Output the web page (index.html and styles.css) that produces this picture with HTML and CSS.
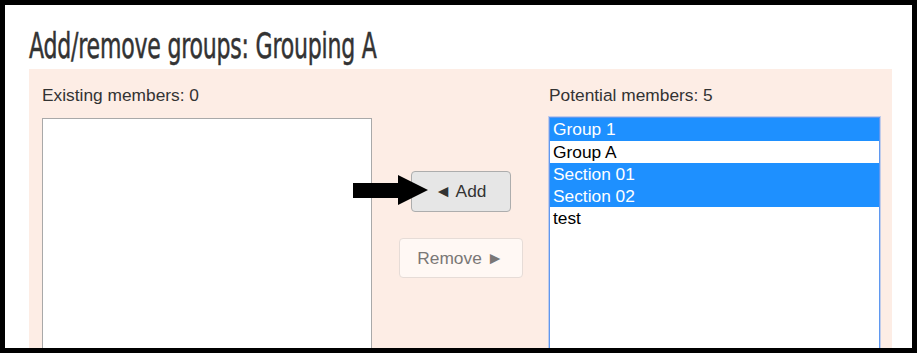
FILE: index.html
```html
<!DOCTYPE html>
<html>
<head>
<meta charset="utf-8">
<link rel="stylesheet" href="styles.css">
</head>
<body>
<div class="frame">
  <div class="title-row"><h2 class="title">Add/remove groups: Grouping A</h2></div>
  <div class="panel">
    <div class="col">
      <div class="label">Existing members: 0</div>
      <div class="listbox"></div>
    </div>
    <div class="mid">
      <button class="btn btn-add">◄ Add</button>
      <button class="btn btn-remove" disabled>Remove ►</button>
    </div>
    <div class="col">
      <div class="label">Potential members: 5</div>
      <div class="listbox focused">
        <div class="opt sel">Group 1</div>
        <div class="opt">Group A</div>
        <div class="opt sel">Section 01</div>
        <div class="opt sel">Section 02</div>
        <div class="opt">test</div>
      </div>
    </div>
  </div>
  <svg class="pointer" width="76" height="32" viewBox="0 0 76 32">
    <polygon points="0,9 45,9 45,1 75,16 45,31 45,24 0,24" fill="#000"/>
  </svg>
</div>
</body>
</html>
```
FILE: styles.css
```css
html, body {
  margin: 0;
  padding: 0;
  background: #000;
}
.frame {
  position: relative;
  width: 917px;
  height: 353px;
  box-sizing: border-box;
  border: 5px solid #000;
  background: #fff;
  overflow: hidden;
  padding-left: 24px;
}
.title-row {
  height: 64px;
  box-sizing: border-box;
  padding-top: 21px;
}
.title {
  margin: 0;
  display: inline-block;
  font-family: "DejaVu Sans Condensed", "DejaVu Sans", sans-serif;
  font-weight: normal;
  font-size: 35px;
  line-height: 40px;
  color: #333;
  transform: scaleX(0.7);
  transform-origin: left center;
  white-space: nowrap;
  letter-spacing: -0.3px;
  -webkit-text-stroke: 0.5px #333;
}
.panel {
  width: 863px;
  height: 300px;
  box-sizing: border-box;
  background: #fdede5;
  padding: 16px 12px 0 13px;
  display: grid;
  grid-template-columns: 330px 177px 331px;
  align-items: start;
  font-family: "Liberation Sans", Arial, sans-serif;
  font-size: 17.33px;
  color: #333;
}
.label {
  line-height: 20px;
  height: 20px;
  margin-bottom: 13px;
}
.listbox {
  height: 260px;
  background: #fff;
  border: 1px solid #a9a9a9;
  box-sizing: border-box;
}
.focused {
  border: 1px solid #5f98f0;
  box-shadow: 0 0 0 1px rgba(120, 165, 240, 0.45);
  margin-top: -1px;
}
.opt {
  height: 22px;
  line-height: 22px;
  padding-left: 3px;
  color: #000;
  white-space: nowrap;
}
.opt:first-child {
  height: 23px;
}
.opt.sel {
  background: #1e90ff;
  color: #fff;
}
.mid {
  padding-top: 86px;
  display: flex;
  flex-direction: column;
  align-items: center;
  gap: 26px;
}
.btn {
  font-family: "Liberation Sans", Arial, sans-serif;
  font-size: 17.33px;
  border-radius: 4px;
  box-sizing: border-box;
  padding: 0;
  margin: 0;
}
.btn-add {
  width: 100px;
  height: 41px;
  background: #e6e6e6;
  border: 1px solid #adadad;
  color: #333;
}
.btn-remove {
  width: 124px;
  height: 40px;
  background: #fff8f4;
  border: 1px solid #e6dcd7;
  color: #7a7776;
}
.pointer {
  position: absolute;
  left: 348px;
  top: 169px;
}
```
